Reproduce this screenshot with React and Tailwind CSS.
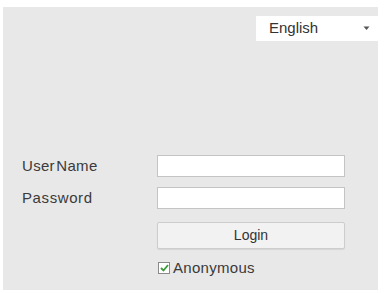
export default function App() {
  return (
    <div className="w-[384px] h-[293px] bg-white pt-[7px] pl-[3px] font-['Liberation_Sans',Arial,sans-serif] text-[#3a3a3a]">
      <div className="w-[375px] h-[283px] bg-[#e8e8e8] flex flex-col">
        {/* language select */}
        <div className="flex justify-end pt-[9px]">
          <div className="w-[122px] h-[25px] bg-white flex items-center justify-between pl-[13px] pr-[8px] text-[15px] text-[#333]">
            <span>English</span>
            <svg width="7" height="5" viewBox="0 0 7 5">
              <path d="M0.5 0.5 L3.5 4 L6.5 0.5 Z" fill="#555" />
            </svg>
          </div>
        </div>

        {/* form */}
        <div className="mt-[114px] flex flex-col gap-[9px]">
          <div className="flex items-center">
            <label className="w-[154px] pl-[19px] text-[15px] tracking-[0.3px] [word-spacing:-3px]">User Name</label>
            <input className="w-[188px] h-[22px] bg-white border border-[#c4c4c4] outline-none" />
          </div>
          <div className="flex items-center">
            <label className="w-[154px] pl-[19px] text-[15px] tracking-[0.6px]">Password</label>
            <input type="password" className="w-[188px] h-[22px] bg-white border border-[#c4c4c4] outline-none" />
          </div>
          <div className="flex pl-[154px] mt-[4px]">
            <button className="w-[188px] h-[27px] bg-[#f2f2f2] border border-[#cdcdcd] rounded-[2px] text-[14px] text-[#333] shadow-[0_1px_1px_rgba(0,0,0,0.08)]">
              Login
            </button>
          </div>
          <div className="flex items-center pl-[155px] gap-[3px] -mt-[1px]">
            <span className="w-[12px] h-[12px] bg-white border border-[#8a8a8a] flex items-center justify-center">
              <svg width="9" height="8" viewBox="0 0 9 8">
                <path d="M1 4 L3.5 6.5 L8 1" stroke="#3a9a3a" strokeWidth="1.8" fill="none" />
              </svg>
            </span>
            <span className="text-[15px] tracking-[0.3px]">Anonymous</span>
          </div>
        </div>
      </div>
    </div>
  );
}
